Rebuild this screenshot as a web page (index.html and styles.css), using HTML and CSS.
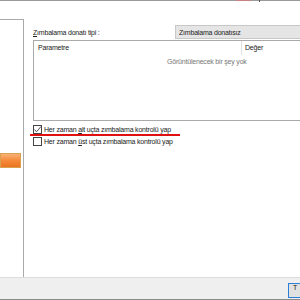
FILE: index.html
```html
<!DOCTYPE html>
<html lang="tr">
<head>
    <meta charset="UTF-8">
    <title>Zımbalama</title>
    <link rel="stylesheet" href="styles.css">
</head>
<body>
    <div class="topBar">
        <span class="redMark"></span>
        <span class="tick"></span>
    </div>
    <div class="window">
        <div class="sidePanel">
            <div class="sideBox">
                <div class="orangeBtn"></div>
            </div>
        </div>
        <div class="content">
            <div class="typeRow">
                <label class="typeLabel"><u>Z</u>ımbalama donatı tipi :</label>
                <div class="combo">Zımbalama donatısız</div>
            </div>
            <div class="listBox">
                <div class="listHead">
                    <div class="colParam">Parametre</div>
                    <div class="colValue">Değer</div>
                </div>
                <div class="emptyText">Görüntülenecek bir şey yok</div>
            </div>
            <div class="checkRow marked">
                <span class="box checked">
                    <svg width="9" height="9" viewBox="0 0 9 9"><path d="M1.5 4.5 L3.5 6.8 L8 1.5" fill="none" stroke="#555" stroke-width="1"/></svg>
                </span>
                <span>Her zaman <u>a</u>lt uçta zımbalama kontrolü yap</span>
            </div>
            <div class="checkRow">
                <span class="box"></span>
                <span>Her zaman <u>ü</u>st uçta zımbalama kontrolü yap</span>
            </div>
        </div>
    </div>
    <div class="footer">
        <div class="footBtn">T</div>
    </div>
    <div class="bottomLine"></div>
</body>
</html>
```

FILE: styles.css
```css
*{
    box-sizing: border-box;
}
body{
    margin: 0;
    width: 300px;
    height: 300px;
    overflow: hidden;
    background-color: white;
    font-family: "Liberation Sans", Arial, sans-serif;
    font-size: 7px;
    letter-spacing: -0.2px;
    color: #222;
}
.topBar{
    height: 1px;
    background-color: #9a9a9a;
    position: relative;
}
.redMark{
    position: absolute;
    left: 236px;
    top: 0;
    width: 15px;
    height: 1px;
    background-color: #c98080;
}
.tick{
    position: absolute;
    left: 259px;
    top: 0;
    width: 1px;
    height: 2px;
    background-color: #555;
}
.window{
    display: flex;
    height: 276px;
}
.sidePanel{
    width: 24px;
    padding-top: 18px;
}
.sideBox{
    height: 100%;
    border-top: 1px solid #aaa;
    border-right: 1px solid #aaa;
    padding-top: 133px;
}
.orangeBtn{
    width: 21px;
    height: 15px;
    border: 1px solid #d9a050;
    background: linear-gradient(#f9b278, #f58a3a 50%, #ea7420);
}
.content{
    flex: 1;
    padding: 24px 0 0 9px;
}
.typeRow{
    display: flex;
    align-items: center;
    height: 14px;
}
.typeLabel{
    width: 142px;
}
.combo{
    flex: 1;
    height: 14px;
    margin-right: -10px;
    background-color: #e5e5e5;
    border: 1px solid #c8c8c8;
    padding: 3px 0 0 3px;
}
.listBox{
    margin-top: 1px;
    margin-right: -10px;
    height: 81px;
    border: 1px solid #aaa;
}
.listHead{
    display: flex;
    height: 14px;
    padding-top: 3px;
}
.colParam{
    width: 207px;
    padding-left: 4px;
}
.colValue{
    border-left: 1px solid #e0e0e0;
    padding-left: 3px;
    margin-top: -3px;
    padding-top: 3px;
}
.emptyText{
    margin-top: 3px;
    padding-left: 133px;
    color: #777;
}
.checkRow{
    display: flex;
    align-items: center;
    gap: 2px;
    height: 11px;
    margin-top: 1px;
}
.checkRow.marked{
    margin-top: 3px;
    position: relative;
}
.checkRow.marked::after{
    content: "";
    position: absolute;
    left: -3px;
    top: 10px;
    width: 150px;
    height: 2px;
    background-color: #e01010;
}
.box{
    width: 9px;
    height: 9px;
    border: 1px solid #444;
    background-color: white;
    display: flex;
}
.box svg{
    margin: -1px;
}
.footer{
    height: 22px;
    background-color: #efefef;
    border-top: 1px solid #dcdcdc;
    display: flex;
    justify-content: flex-end;
    padding-top: 5px;
}
.footBtn{
    width: 14px;
    height: 15px;
    margin-right: -2px;
    border: 1px solid #2b7fd6;
    background-color: #e1e1e1;
    font-size: 7px;
    text-align: center;
}
.bottomLine{
    height: 1px;
    background-color: #8a8a8a;
}
```
